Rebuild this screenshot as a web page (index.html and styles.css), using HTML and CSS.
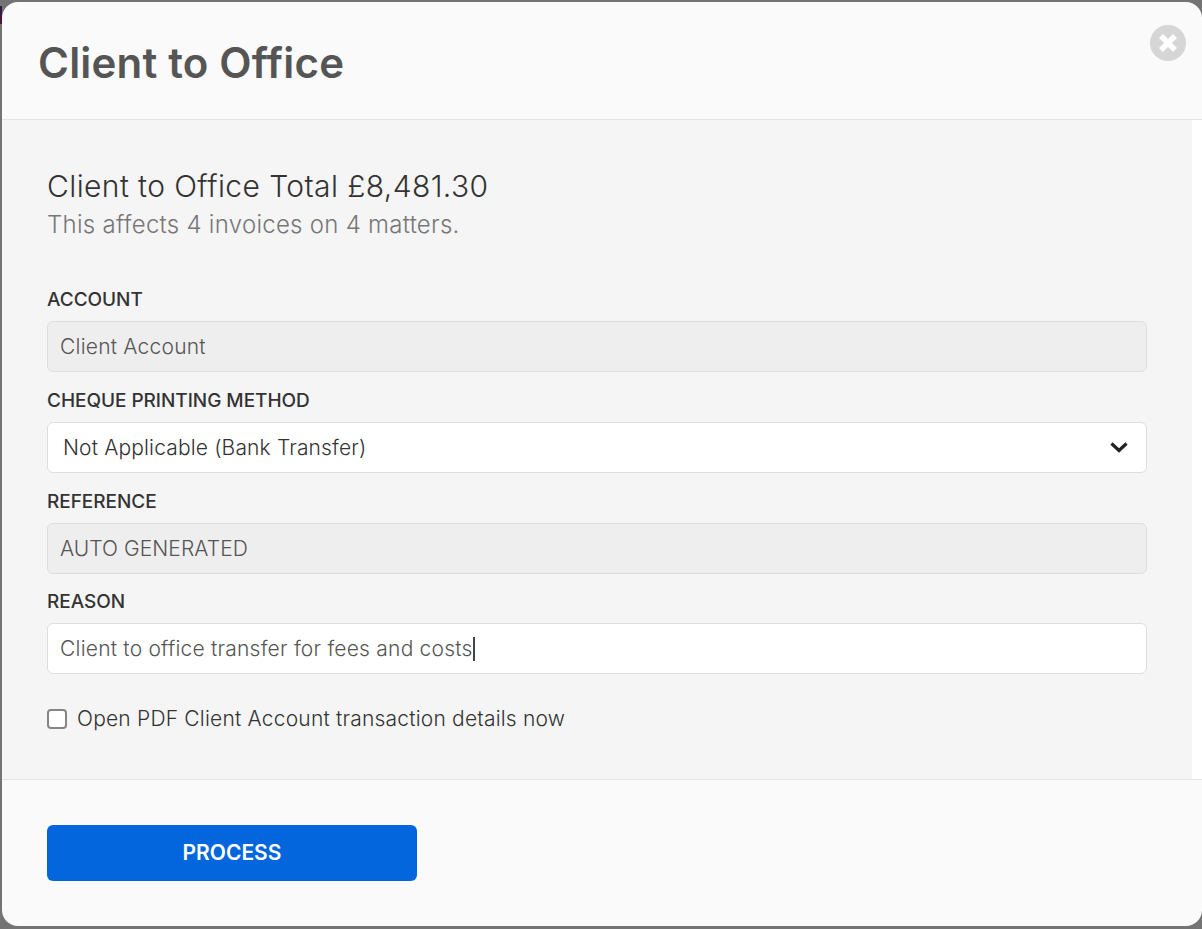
FILE: index.html
```html
<!DOCTYPE html>
<html lang="en">
<head>
<meta charset="utf-8">
<title>Client to Office</title>
<link rel="stylesheet" href="styles.css">
</head>
<body>
<div class="modal">
  <header class="modal-header">
    <h1 class="modal-title">Client to Office</h1>
    <button class="close" aria-label="Close">
      <svg width="36" height="36" viewBox="0 0 36 36"><circle cx="18" cy="18" r="18" fill="#d6d6d6"/><path d="M11 11 25 25M25 11 11 25" stroke="#fff" stroke-width="5.600"/></svg>
    </button>
  </header>
  <div class="body-wrap">
    <main class="modal-body">
      <p class="total">Client to Office Total £8,481.30</p>
      <p class="affects">This affects 4 invoices on 4 matters.</p>
      <label class="label first">ACCOUNT</label>
      <div class="field readonly">Client Account</div>
      <label class="label">CHEQUE PRINTING METHOD</label>
      <div class="field select">
        <span>Not Applicable (Bank Transfer)</span>
        <svg class="chevron" width="18" height="12" viewBox="0 0 18 12"><path d="M1.500 2.500 9 9.500 16.500 2.500" fill="none" stroke="#222" stroke-width="3.200"/></svg>
      </div>
      <label class="label">REFERENCE</label>
      <div class="field readonly caps">AUTO GENERATED</div>
      <label class="label">REASON</label>
      <div class="field"><span>Client to office transfer for fees and costs</span><span class="caret"></span></div>
      <div class="check-row">
        <span class="checkbox"></span>
        <span>Open PDF Client Account transaction details now</span>
      </div>
    </main>
    <div class="gutter"></div>
  </div>
  <footer class="modal-footer">
    <button class="process">PROCESS</button>
  </footer>
</div>
</body>
</html>
```
FILE: styles.css
```css
* { box-sizing: border-box; }
html, body { margin: 0; height: 100%; }
body {
  background: #747474;
  font-family: Inter, "Liberation Sans", sans-serif;
  padding: 2px 0 3px 2px;
  overflow: hidden;
}
body::before {
  content: "";
  position: absolute;
  left: 0;
  top: 6px;
  width: 2px;
  height: 18px;
  background: linear-gradient(#1c2348, #5a1530);
}
.modal {
  height: 924px;
  background: #fafafa;
  border-radius: 16px;
  display: flex;
  flex-direction: column;
  overflow: hidden;
}
.modal-header {
  height: 118px;
  flex: none;
  padding: 0 16px 0 36px;
  display: flex;
  justify-content: space-between;
  border-bottom: 1px solid #e5e5e5;
}
.modal-title {
  margin: 33px 0 0;
  font-size: 42px;
  line-height: 56px;
  font-weight: 600;
  letter-spacing: 0.190px;
  color: #555;
}
.close {
  margin-top: 23px;
  padding: 0;
  border: 0;
  background: none;
  height: 36px;
  width: 36px;
}
.body-wrap { flex: 1; display: flex; background: #fff; }
.modal-body {
  flex: 1;
  background: #f5f5f5;
  padding: 48px 45px 0 45px;
}
.gutter { width: 10px; flex: none; }
.total {
  margin: 0;
  font-size: 30px;
  line-height: 36px;
  font-weight: 300;
  letter-spacing: 0.400px;
  color: #333;
}
.affects {
  margin: 1px 0 0;
  font-size: 24px;
  line-height: 40px;
  font-weight: 300;
  letter-spacing: 0.270px;
  color: #777;
}
.label {
  display: block;
  font-size: 19px;
  line-height: 22px;
  font-weight: 500;
  letter-spacing: -0.040px;
  color: #333;
  padding-top: 2px;
  margin: 15.670px 0 10px;
}
.label.first { margin-top: 42.300px; }
.field {
  height: 51px;
  border: 1px solid #dedede;
  border-radius: 6px;
  background: #fff;
  font-size: 21px;
  font-weight: 300;
  letter-spacing: 0.220px;
  color: #555;
  padding: 0 12px;
  display: flex;
  align-items: center;
}
.readonly { background: #eeeeee; }
.caps { letter-spacing: 0.070px; }
.select {
  padding: 0 15px 0 15px;
  justify-content: space-between;
  letter-spacing: 0.150px;
  color: #333;
}
.chevron { margin-right: 3px; }
.caret {
  width: 2px;
  height: 24px;
  background: #444;
}
.check-row {
  display: flex;
  align-items: center;
  gap: 10px;
  margin-top: 32px;
  font-size: 21px;
  font-weight: 300;
  letter-spacing: 0.200px;
  color: #333;
}
.checkbox {
  width: 20px;
  height: 20px;
  border: 2px solid #858585;
  border-radius: 4px;
  background: #fff;
}
.modal-footer {
  height: 147px;
  flex: none;
  border-top: 1px solid #e5e5e5;
  padding: 45px 45px 0;
}
.process {
  display: block;
  width: 370px;
  height: 56px;
  padding: 0 0 2px;
  border: 0;
  border-radius: 6px;
  background: #0366dd;
  color: #fff;
  font: 600 21px Inter, "Liberation Sans", sans-serif;
}
```
